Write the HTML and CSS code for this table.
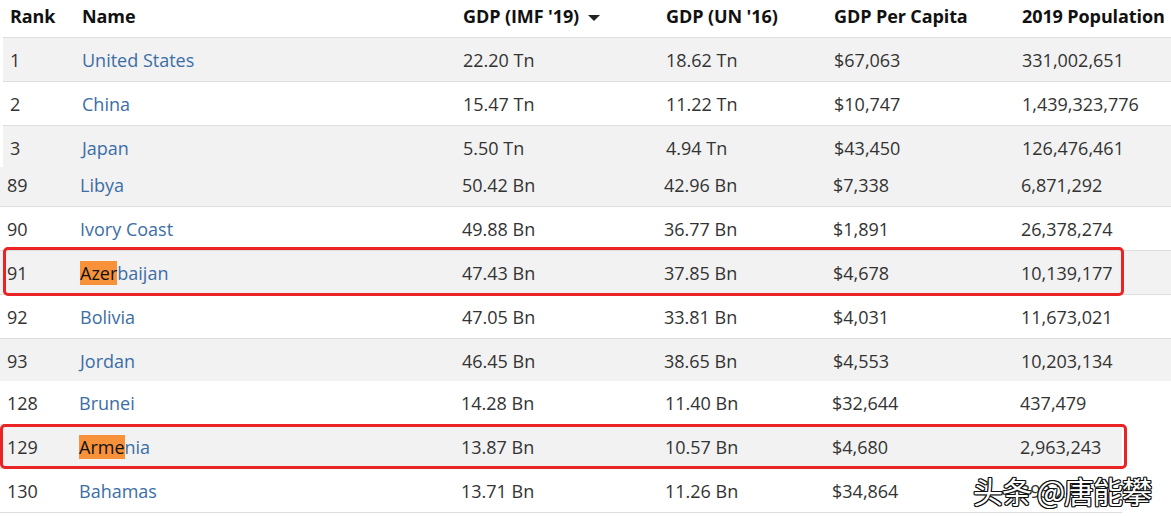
FILE: index.html
```html
<!DOCTYPE html>
<html>
<head>
<meta charset="utf-8">
<link rel="stylesheet" href="styles.css">
</head>
<body>
<div class="page">
  <div class="table t1">
    <div class="row head">
      <div>Rank</div><div>Name</div><div class="sort">GDP (IMF '19) <span class="caret"></span></div><div>GDP (UN '16)</div><div>GDP Per Capita</div><div>2019 Population</div>
    </div>
    <div class="row gray"><div>1</div><div class="link">United States</div><div>22.20 Tn</div><div>18.62 Tn</div><div>$67,063</div><div>331,002,651</div></div>
    <div class="row"><div>2</div><div class="link">China</div><div>15.47 Tn</div><div>11.22 Tn</div><div>$10,747</div><div>1,439,323,776</div></div>
    <div class="row gray cut-a"><div>3</div><div class="link">Japan</div><div>5.50 Tn</div><div>4.94 Tn</div><div>$43,450</div><div>126,476,461</div></div>
  </div>
  <div class="table t2">
    <div class="row gray cut-b"><div>89</div><div class="link">Libya</div><div>50.42 Bn</div><div>42.96 Bn</div><div>$7,338</div><div>6,871,292</div></div>
    <div class="row"><div>90</div><div class="link">Ivory Coast</div><div>49.88 Bn</div><div>36.77 Bn</div><div>$1,891</div><div>26,378,274</div></div>
    <div class="row gray marked"><div>91</div><div class="link"><span class="hl">Azer</span>baijan</div><div>47.43 Bn</div><div>37.85 Bn</div><div>$4,678</div><div>10,139,177</div><span class="redbox rb1"></span></div>
    <div class="row"><div>92</div><div class="link">Bolivia</div><div>47.05 Bn</div><div>33.81 Bn</div><div>$4,031</div><div>11,673,021</div></div>
    <div class="row gray cut-c"><div>93</div><div class="link">Jordan</div><div>46.45 Bn</div><div>38.65 Bn</div><div>$4,553</div><div>10,203,134</div></div>
  </div>
  <div class="table t3">
    <div class="row"><div>128</div><div class="link">Brunei</div><div>14.28 Bn</div><div>11.40 Bn</div><div>$32,644</div><div>437,479</div></div>
    <div class="row gray marked"><div>129</div><div class="link"><span class="hl">Arme</span>nia</div><div>13.87 Bn</div><div>10.57 Bn</div><div>$4,680</div><div>2,963,243</div><span class="redbox rb2"></span></div>
    <div class="row"><div>130</div><div class="link">Bahamas</div><div>13.71 Bn</div><div>11.26 Bn</div><div>$34,864</div><div class="under">393,244</div></div>
  </div>
  <div class="watermark">头条 @唐能攀</div>
</div>
</body>
</html>
```
FILE: styles.css
```css
* { box-sizing: border-box; }
html, body { margin: 0; padding: 0; background: #fff; }
body {
  font-family: "Open Sans", "Noto Sans", "Noto Sans CJK SC", sans-serif;
  font-size: 18px;
  color: #333;
  width: 1171px;
  height: 516px;
  overflow: hidden;
}
.page { position: relative; display: flex; flex-direction: column; }
.table { display: flex; flex-direction: column; }
.row {
  display: grid;
  height: 44px;
  line-height: 44px;
  padding-left: 7px;
  border-bottom: 1px solid #dedede;
  white-space: nowrap;
  overflow: hidden;
}
.row.marked { position: relative; overflow: visible; }
.row.gray { background: #f2f2f2; }
.t1 { margin-left: 3px; }
.t1 .row { grid-template-columns: 72px 381px 203px 168px 188px 1fr; }
.t2 .row { grid-template-columns: 73px 382px 202px 169px 188px 1fr; }
.t3 { width: 1122px; }
.t3 .row { grid-template-columns: 72px 382px 204px 167px 188px 1fr; }
.row.head {
  height: 38px;
  line-height: 33px;
  font-weight: 700;
  color: #111;
  font-size: 18px;
  letter-spacing: -0.1px;
}
.caret {
  display: inline-block;
  width: 0; height: 0;
  border-left: 6px solid transparent;
  border-right: 6px solid transparent;
  border-top: 6px solid #222;
  vertical-align: middle;
  margin-left: 4px;
}
.row.cut-a { height: 41px; border-bottom: 0; line-height: 44px; }
.row.cut-b { height: 40px; line-height: 37px; }
.row.cut-c { height: 42px; border-bottom: 0; line-height: 44px; }
.link { color: #3b6ea6; }
.hl { background: #f7923a; color: #111; }
.under { color: #333; }
.redbox {
  position: absolute;
  border: 3px solid #ea2424;
  border-radius: 5px;
  pointer-events: none;
}
.rb1 { left: 3px; top: -4px; width: 1121px; height: 49px; }
.rb2 { left: 0; top: -1px; width: 1127px; height: 45px; }
.watermark {
  position: absolute;
  left: 973px;
  top: 472px;
  font-family: "Noto Sans CJK SC", sans-serif;
  font-size: 30px;
  line-height: 36px;
  color: #fff;
  text-shadow: -1px -1px 0 #111, 1px -1px 0 #111, -1px 1px 0 #111, 1px 1px 0 #111, 0 1px 0 #111, 0 -1px 0 #111, 1px 0 0 #111, -1px 0 0 #111;
  letter-spacing: -1px;
}
```
